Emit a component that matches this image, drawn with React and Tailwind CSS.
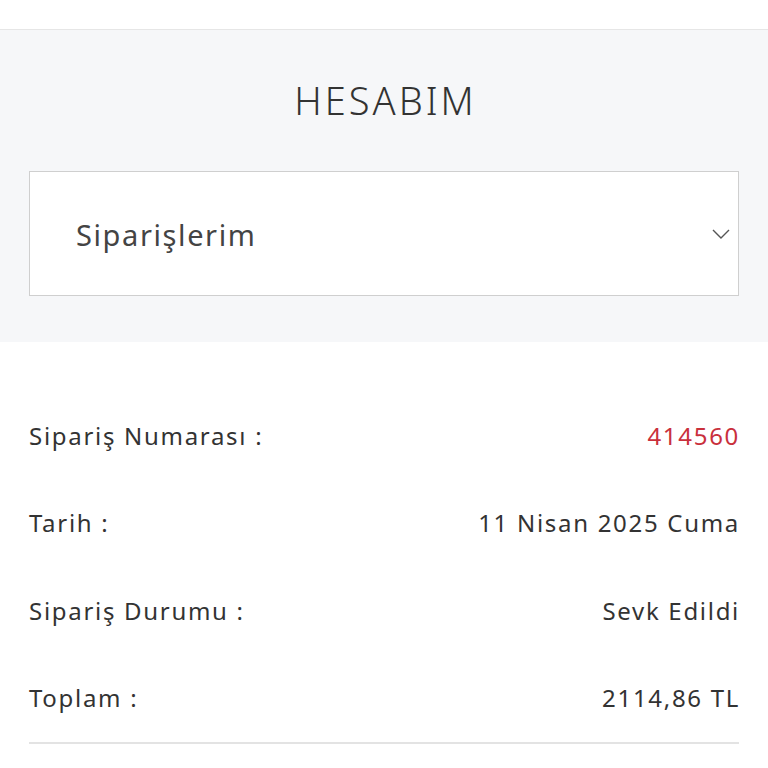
import React from "react";

export default function App() {
  const rows = [
    ["Sipariş Numarası :", "414560", true],
    ["Tarih :", "11 Nisan 2025 Cuma", false],
    ["Sipariş Durumu :", "Sevk Edildi", false],
    ["Toplam :", "2114,86 TL", false],
  ];
  return (
    <div className="w-[768px] h-[768px] bg-white overflow-hidden text-[#333]" style={{ fontFamily: '"Noto Sans", "Open Sans", sans-serif' }}>
      <div className="h-[30px] bg-white border-b border-[#e6e6e6]" />
      <div className="bg-[#f6f7f9] px-[29px] pt-[45px] pb-[46px]">
        <h1 className="text-center text-[38px] leading-[50px] font-light tracking-[3px] pl-[3px] text-[#333]">HESABIM</h1>
        <div className="mt-[46px] h-[125px] bg-white border border-[#cfcfcf] flex items-center justify-between pl-[46px] pr-[8px]">
          <span className="text-[29px] text-[#444] tracking-[1.6px] pt-[2px]">Siparişlerim</span>
          <svg width="18" height="12" viewBox="0 0 18 12" fill="none" stroke="#555" strokeWidth="1.4">
            <path d="M1 2 L9 10 L17 2" />
          </svg>
        </div>
      </div>
      <div className="px-[29px] pt-[76px]">
        {rows.map(([k, v, red], i) => (
          <div key={i} className="h-[87.3px] flex items-start justify-between text-[24px] leading-[36px] tracking-[1.7px]">
            <span className="text-[#333]">{k}</span>
            <span className={(red ? "text-[#c9303c]" : "text-[#333]") + " mr-[-1px]"}>{v}</span>
          </div>
        ))}
        <div className="border-t-2 border-[#e3e3e3] -mt-[25px]" />
      </div>
    </div>
  );
}
